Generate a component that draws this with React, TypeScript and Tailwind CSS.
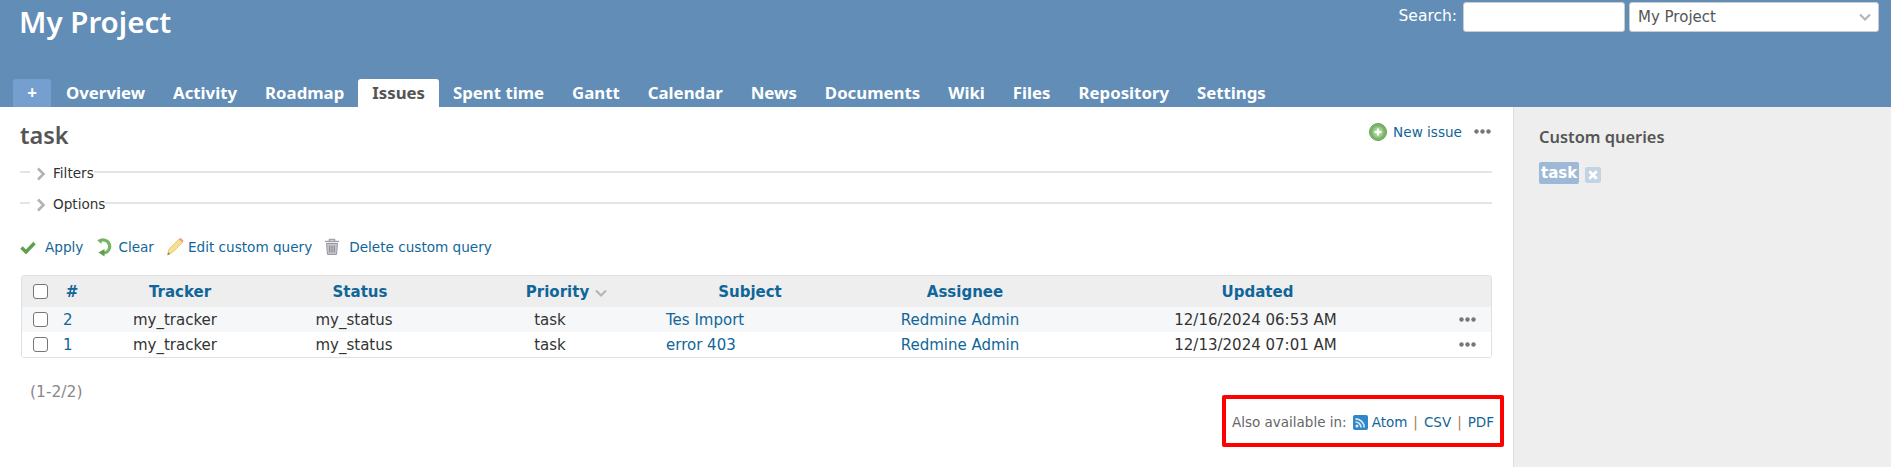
const verdana = "font-['DejaVu_Sans',sans-serif]";
const heading = "font-['Noto_Sans',sans-serif]";

const tabs = ["Overview", "Activity", "Roadmap", "Issues", "Spent time", "Gantt", "Calendar", "News", "Documents", "Wiki", "Files", "Repository", "Settings"];

const issues = [
  { id: 2, subject: "Tes Import", updated: "12/16/2024 06:53 AM", rowClass: "bg-[#f6f7f8]" },
  { id: 1, subject: "error 403", updated: "12/13/2024 07:01 AM", rowClass: "bg-white" },
];

function Dots() {
  return (
    <svg width="17" height="5" viewBox="0 0 17 5" className="inline-block">
      <circle cx="2.5" cy="2.5" r="2.2" fill="#777" />
      <circle cx="8.5" cy="2.5" r="2.2" fill="#777" />
      <circle cx="14.5" cy="2.5" r="2.2" fill="#777" />
    </svg>
  );
}

function Checkbox() {
  return <input type="checkbox" className="block h-[15px] w-[15px] appearance-none rounded-[3px] border-[1.5px] border-[#767676] bg-white" />;
}

function Chevron() {
  return (
    <svg width="10" height="14" viewBox="0 0 10 14">
      <path d="M2 1.5 L7.5 7 L2 12.5" fill="none" stroke="#b3b3b3" strokeWidth="2.6" />
    </svg>
  );
}

function Fieldset({ label }: { label: string }) {
  return (
    <div className="flex h-[31px] items-center">
      <div className="mb-[3px] h-[2px] w-[10px] bg-[#e4e4e4]" />
      <div className="ml-[6px] flex w-[17px] items-center"><Chevron /></div>
      <span className="text-[#333]">{label}</span>
      <div className="mb-[3px] h-[2px] flex-1 bg-[#e4e4e4]" />
    </div>
  );
}

export default function App() {
  return (
    <div className={`flex h-[467px] w-[1891px] flex-col overflow-hidden bg-white text-[13.6px] text-[#333] ${verdana}`}>
      <header className="flex h-[107px] flex-col bg-[#628db6]">
        <div className="flex h-[79px] items-start justify-between pr-[12px]">
          <h1 className={`pl-[19px] pt-[2px] text-[29.5px] font-semibold leading-[40px] text-white ${heading}`}>My Project</h1>
          <div className="flex items-center pt-[2px] text-[15px]">
            <span className="mr-[6px] text-[15.5px] text-white">Search:</span>
            <input className="h-[30px] w-[162px] rounded-[3px] border border-[#ccc] bg-white" />
            <div className="ml-[4px] flex h-[30px] w-[250px] items-center justify-between rounded-[3px] border border-[#ccc] bg-white pl-[8px] pr-[7px] text-[#555]">
              <span>My Project</span>
              <svg width="12" height="8" viewBox="0 0 12 8">
                <path d="M1 1.5 L6 6.5 L11 1.5" fill="none" stroke="#b5b5b5" strokeWidth="2.2" />
              </svg>
            </div>
          </div>
        </div>
        <nav className={`flex h-[28px] items-stretch pl-[13px] text-[16.8px] font-bold leading-[28px] text-white ${heading}`}>
          <div className="mr-[1px] flex w-[38px] items-center justify-center rounded-t-[3px] bg-[#759fcf] text-[17px]">+</div>
          {tabs.map((tab) => (
            <div
              key={tab}
              className={tab === "Issues" ? "rounded-t-[3px] bg-white px-[14px] text-[#555]" : "px-[14px]"}
            >
              {tab}
            </div>
          ))}
        </nav>
      </header>

      <div className="flex flex-1">
        <main className="flex w-[1513px] flex-col pl-[20px] pr-[21px]">
          <div className="flex h-[50px] items-center justify-between">
            <h2 className={`pt-[6px] text-[23.5px] font-semibold leading-[30px] text-[#555] ${heading}`}>task</h2>
            <div className="flex items-center pr-[1px] text-[#169]">
              <svg width="18" height="18" viewBox="0 0 18 18" className="mr-[6px]">
                <circle cx="9" cy="9" r="8.5" fill="#7db46c" stroke="#6aa35a" />
                <circle cx="9" cy="9" r="5.5" fill="#9ccc8a" />
                <path d="M9 5.5 V12.5 M5.5 9 H12.5" stroke="#fff" strokeWidth="2.4" />
              </svg>
              <span>New issue</span>
              <span className="ml-[12px] flex"><Dots /></span>
            </div>
          </div>

          <div className="pt-[1px]">
            <Fieldset label="Filters" />
            <Fieldset label="Options" />
          </div>

          <div className="mt-[11px] flex h-[32px] items-center text-[#169]">
            <svg width="16" height="14" viewBox="0 0 16 14" className="mr-[9px]">
              <path d="M1.5 7.5 L6 12 L14.5 3" fill="none" stroke="#5fa04e" strokeWidth="3.4" />
            </svg>
            <span>Apply</span>
            <svg width="18" height="19" viewBox="0 0 18 19" className="ml-[12px] mr-[5px]">
              <path d="M4 3.5 A6.5 6.5 0 1 1 8 15" fill="none" stroke="#78b562" strokeWidth="3.2" />
              <path d="M2 2 L7 1 L6.5 6 Z" fill="#78b562" />
              <path d="M9.5 11 L3.5 14.5 L9.5 18.5 Z" fill="#5f9f4c" />
            </svg>
            <span>Clear</span>
            <svg width="18" height="20" viewBox="0 0 18 20" className="ml-[12px] mr-[4px]">
              <path d="M1.5 18 L3 12 L13 2 L16.5 5.5 L6.5 15.5 Z" fill="#f4df93" stroke="#e2c368" strokeWidth="0.8" />
              <path d="M13 2 L14.5 0.8 L17.5 3.6 L16.5 5.5 Z" fill="#ef9aa0" />
              <path d="M1.5 18 L2.2 15.5 L4.2 17 Z" fill="#8a7650" />
            </svg>
            <span>Edit custom query</span>
            <svg width="16" height="18" viewBox="0 0 16 18" className="ml-[12px] mr-[9px]">
              <path d="M1 3.5 H15 M5.5 3 V1.5 H10.5 V3" fill="none" stroke="#a3a3ad" strokeWidth="1.6" />
              <path d="M2.5 5.5 H13.5 L12.5 16.5 H3.5 Z" fill="#c6c6ce" stroke="#9a9aa4" />
              <path d="M5.7 7.5 V14.5 M8 7.5 V14.5 M10.3 7.5 V14.5" stroke="#85858f" strokeWidth="1.1" />
            </svg>
            <span>Delete custom query</span>
          </div>

          <div className="ml-[1px] mt-[12px] overflow-hidden rounded-[3px] border border-[#e0e0e0] text-[15px]">
            <table className="w-[1470px] table-fixed border-collapse">
              <colgroup>
                <col className="w-[35px]" />
                <col className="w-[34px]" />
                <col className="w-[170px]" />
                <col className="w-[188px]" />
                <col className="w-[202px]" />
                <col className="w-[186px]" />
                <col className="w-[248px]" />
                <col className="w-[361px]" />
                <col className="w-[46px]" />
              </colgroup>
              <thead>
                <tr className="h-[31px] bg-[#eeeeee] pt-[1px] font-bold text-[#169]">
                  <th className="pl-[11px]"><Checkbox /></th>
                  <th className="pr-[4px] pt-[2px] text-center">#</th>
                  <th className="pl-[8px] pt-[2px] text-center">Tracker</th>
                  <th className="pl-[10px] pt-[2px] text-center">Status</th>
                  <th className="pl-[33px] pt-[2px] text-center">
                    <span className="inline-flex items-center">
                      Priority
                      <svg width="12" height="8" viewBox="0 0 12 8" className="ml-[6px]">
                        <path d="M1 1.5 L6 6.5 L11 1.5" fill="none" stroke="#b3b3b3" strokeWidth="2" />
                      </svg>
                    </span>
                  </th>
                  <th className="pl-[12px] pt-[2px] text-center">Subject</th>
                  <th className="pl-[8px] pt-[2px] text-center">Assignee</th>
                  <th className="pr-[16px] pt-[2px] text-center">Updated</th>
                  <th />
                </tr>
              </thead>
              <tbody>
                {issues.map((issue) => (
                  <tr key={issue.id} className={`h-[25px] ${issue.rowClass}`}>
                    <td className="pl-[11px]"><Checkbox /></td>
                    <td className="pl-[6px] pt-[2px] text-left text-[#169]">{issue.id}</td>
                    <td className="pr-[2px] pt-[2px] text-center">my_tracker</td>
                    <td className="pr-[2px] pt-[2px] text-center">my_status</td>
                    <td className="pt-[2px] text-center">task</td>
                    <td className="pl-[15px] pt-[2px] text-left text-[#169]">{issue.subject}</td>
                    <td className="pr-[2px] pt-[2px] text-center text-[#169]">Redmine Admin</td>
                    <td className="pr-[20px] pt-[2px] text-center">{issue.updated}</td>
                    <td className="pr-[3px] text-center"><Dots /></td>
                  </tr>
                ))}
              </tbody>
            </table>
          </div>

          <div className="ml-[10px] mt-[25px] text-[15.5px] leading-[18px] text-[#888]">(1-2/2)</div>

          <div className="-mr-[12px] mt-[-6px] flex justify-end">
            <div className="flex h-[52px] w-[282px] items-center justify-center rounded-[2px] border-4 border-[#ff0000] pt-[2px] text-[13.5px] text-[#666]">
              <span>Also available in:</span>
              <svg width="15" height="15" viewBox="0 0 15 15" className="ml-[6px] mr-[4px]">
                <rect width="15" height="15" rx="2" fill="#2f86c9" />
                <circle cx="4" cy="11" r="1.6" fill="#dbe9f5" />
                <path d="M2.5 7 A5.5 5.5 0 0 1 8 12.5 M2.5 3.8 A8.7 8.7 0 0 1 11.2 12.5" fill="none" stroke="#dbe9f5" strokeWidth="1.7" />
              </svg>
              <span className="text-[#169]">Atom</span>
              <span className="mx-[6px] text-[#a87b4a]">|</span>
              <span className="text-[#169]">CSV</span>
              <span className="mx-[6px] text-[#a87b4a]">|</span>
              <span className="text-[#169]">PDF</span>
            </div>
          </div>
        </main>

        <aside className="w-[378px] border-l border-[#dddddd] bg-[#eeeeee] pl-[25px] pt-[15px]">
          <h3 className={`text-[16.4px] font-semibold leading-[30px] text-[#555] ${heading}`}>Custom queries</h3>
          <div className="mt-[10px] flex items-center">
            <span className="flex h-[22px] items-center rounded-[2px] bg-[#9db9d5] px-[2px] text-[15px] font-bold text-white">task</span>
            <svg width="16" height="16" viewBox="0 0 15 15" className="ml-[6px] mt-[3px]">
              <rect width="15" height="15" rx="2" fill="#c2d3e4" />
              <path d="M4 4 L11 11 M11 4 L4 11" stroke="#fff" strokeWidth="2.6" />
            </svg>
          </div>
        </aside>
      </div>
    </div>
  );
}
